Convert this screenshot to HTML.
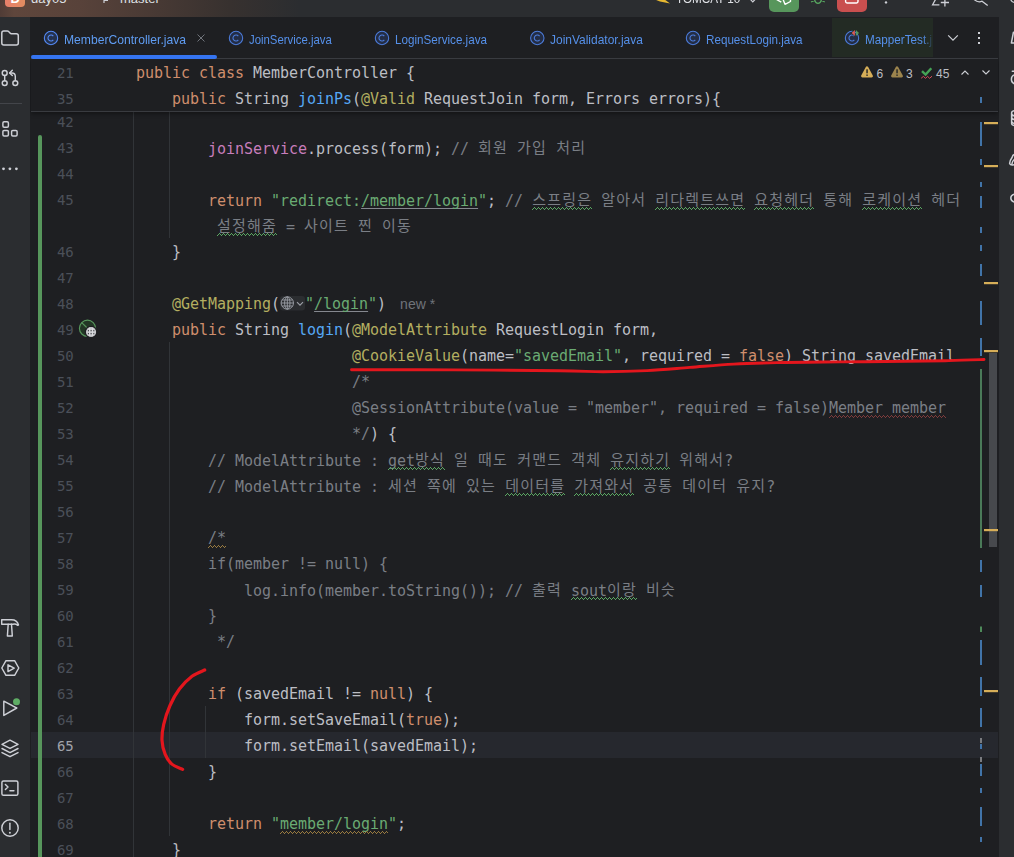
<!DOCTYPE html>
<html lang="ko"><head><meta charset="utf-8"><title>MemberController.java</title>
<style>
html,body{margin:0;padding:0;background:#1E1F22;}
body{width:1014px;height:857px;position:relative;overflow:hidden;font-family:"Liberation Sans","Noto Sans CJK KR",sans-serif;}
.abs{position:absolute}
#top{position:absolute;left:0;top:0;width:1014px;height:17px;background:linear-gradient(90deg,#503C36 0px,#5F463C 14px,#58423A 80px,#473934 160px,#37312F 230px,#2B2D30 300px);overflow:hidden}
.tt{font-size:13px;line-height:13px;color:#DFE1E5;white-space:nowrap}
#lside{position:absolute;left:0;top:17px;width:30px;height:840px;background:#2B2D30}
#rside{position:absolute;left:999px;top:17px;width:15px;height:840px;background:#2B2D30}
#tabs{position:absolute;left:31px;top:17px;width:967px;height:41px;background:#1E1F22;border-bottom:1px solid #393B40}
.tab{position:absolute;top:18.5px;height:41px;line-height:41px;font-size:13px;color:#5590EA;white-space:nowrap;transform-origin:0 50%}
.tab.act{color:#5F9CF2}
.cl{position:absolute;height:26px;line-height:26px;white-space:pre;font-family:"DejaVu Sans Mono", "Liberation Mono", monospace;font-size:15px;color:#BCBEC4;letter-spacing:-0.03px}
.ln{position:absolute;left:31px;width:42.4px;text-align:right;height:26px;line-height:26px;font-family:"DejaVu Sans Mono", "Liberation Mono", monospace;font-size:14px;color:#4B5059;letter-spacing:-0.2px}
.ln.cur{color:#A1A3AB}
.k{font-family:"Noto Sans CJK KR","NanumGothic",sans-serif;font-size:15px;letter-spacing:1.2px;position:relative;top:-1px}
.kw{color:#CF8E6D} .fn{color:#56A8F5} .an{color:#B3AE60} .st{color:#6AAB73} .cm{color:#7A7E85} .fld{color:#C77DBB}
.ul{text-decoration:underline;text-decoration-color:#85888F;text-decoration-thickness:1px;text-underline-offset:1.5px;text-decoration-skip-ink:none}
.inl{display:inline-block;width:25px;height:14px;vertical-align:middle}
.hint{font-family:"Liberation Sans",sans-serif;font-size:14px;color:#6F737A;letter-spacing:0;margin-left:14px}
.wn{position:absolute;top:60px;height:28px;line-height:28px;font-size:12px;color:#BCBEC4}
#sticky{position:absolute;left:31px;top:59px;width:967px;height:52px;background:#1E1F22;border-bottom:1px solid #393B40;box-shadow:0 2px 4px rgba(0,0,0,.35)}
#curline{position:absolute;left:31px;top:732px;width:967px;height:26px;background:#26282E}
.guide{position:absolute;width:1px;background:#313438}
svg{position:absolute;left:0;top:0;overflow:visible}
</style></head><body>
<div id="curline"></div>
<div class="guide" style="left:133px;top:112px;height:745px"></div>
<div class="guide" style="left:169px;top:112px;height:126px"></div>
<div class="guide" style="left:169px;top:342px;height:494px"></div>
<div class="guide" style="left:205px;top:706px;height:52px"></div>
<div class="abs" style="left:38px;top:135px;width:4px;height:722px;background:#57965C;border-radius:2px 2px 0 0"></div>
<div class="ln" style="top:109px">42</div>
<div class="ln" style="top:135px">43</div>
<div class="cl" style="top:135px;left:136px">        <span class="fld">joinService</span>.process(form); <span class="cm">// <span class="k">회원</span> <span class="k">가입</span> <span class="k">처리</span></span></div>
<div class="ln" style="top:161px">44</div>
<div class="ln" style="top:187px">45</div>
<div class="cl" style="top:187px;left:136px">        <span class="kw">return</span> <span class="st">"redirect:</span><span class="st ul">/member/login</span><span class="st">"</span>; <span class="cm">// <span class="k">스프링은</span> <span class="k">알아서</span> <span class="k">리다렉트쓰면</span> <span class="k">요청헤더</span> <span class="k">통해</span> <span class="k">로케이션</span> <span class="k">헤더</span></span></div>
<div class="cl" style="top:213px;left:208px"><span class="cm"> <span class="k">설정해줌</span> = <span class="k">사이트</span> <span class="k">찐</span> <span class="k">이동</span></span></div>
<div class="ln" style="top:239px">46</div>
<div class="cl" style="top:239px;left:136px">    }</div>
<div class="ln" style="top:265px">47</div>
<div class="ln" style="top:291px">48</div>
<div class="cl" style="top:291px;left:136px">    <span class="an">@GetMapping</span>(<span class="inl"></span><span class="st">"</span><span class="st ul">/login</span><span class="st">"</span>)<span class="hint">new *</span></div>
<div class="ln" style="top:317px">49</div>
<div class="cl" style="top:317px;left:136px">    <span class="kw">public</span> String <span class="fn">login</span>(<span class="an">@ModelAttribute</span> RequestLogin form,</div>
<div class="ln" style="top:343px">50</div>
<div class="cl" style="top:343px;left:136px">                        <span class="an">@CookieValue</span>(name=<span class="st">"savedEmail"</span>, required = <span class="kw">false</span>) String savedEmail</div>
<div class="ln" style="top:369px">51</div>
<div class="cl" style="top:369px;left:136px">                        <span class="cm">/*</span></div>
<div class="ln" style="top:395px">52</div>
<div class="cl" style="top:395px;left:136px">                        <span class="cm">@SessionAttribute(value = "member", required = false)Member member</span></div>
<div class="ln" style="top:421px">53</div>
<div class="cl" style="top:421px;left:136px">                        <span class="cm">*/</span>) {</div>
<div class="ln" style="top:447px">54</div>
<div class="cl" style="top:447px;left:136px">        <span class="cm">// ModelAttribute : get<span class="k">방식</span> <span class="k">일</span> <span class="k">때도</span> <span class="k">커맨드</span> <span class="k">객체</span> <span class="k">유지하기</span> <span class="k">위해서</span>?</span></div>
<div class="ln" style="top:473px">55</div>
<div class="cl" style="top:473px;left:136px">        <span class="cm">// ModelAttribute : <span class="k">세션</span> <span class="k">쪽에</span> <span class="k">있는</span> <span class="k">데이터를</span> <span class="k">가져와서</span> <span class="k">공통</span> <span class="k">데이터</span> <span class="k">유지</span>?</span></div>
<div class="ln" style="top:499px">56</div>
<div class="ln" style="top:525px">57</div>
<div class="cl" style="top:525px;left:136px">        <span class="cm">/*</span></div>
<div class="ln" style="top:551px">58</div>
<div class="cl" style="top:551px;left:136px">        <span class="cm">if(member != null) {</span></div>
<div class="ln" style="top:577px">59</div>
<div class="cl" style="top:577px;left:136px">            <span class="cm">log.info(member.toString()); // <span class="k">출력</span> sout<span class="k">이랑</span> <span class="k">비슷</span></span></div>
<div class="ln" style="top:603px">60</div>
<div class="cl" style="top:603px;left:136px">        <span class="cm">}</span></div>
<div class="ln" style="top:629px">61</div>
<div class="cl" style="top:629px;left:136px">         <span class="cm">*/</span></div>
<div class="ln" style="top:655px">62</div>
<div class="ln" style="top:681px">63</div>
<div class="cl" style="top:681px;left:136px">        <span class="kw">if</span> (savedEmail != <span class="kw">null</span>) {</div>
<div class="ln" style="top:707px">64</div>
<div class="cl" style="top:707px;left:136px">            form.setSaveEmail(<span class="kw">true</span>);</div>
<div class="ln cur" style="top:733px">65</div>
<div class="cl" style="top:733px;left:136px">            form.setEmail(savedEmail);</div>
<div class="ln" style="top:759px">66</div>
<div class="cl" style="top:759px;left:136px">        }</div>
<div class="ln" style="top:785px">67</div>
<div class="ln" style="top:811px">68</div>
<div class="cl" style="top:811px;left:136px">        <span class="kw">return</span> <span class="st">"member/login"</span>;</div>
<div class="ln" style="top:837px">69</div>
<div class="cl" style="top:837px;left:136px">    }</div>
<div id="sticky"></div>
<div class="ln" style="top:60px">21</div>
<div class="cl" style="top:60px;left:136px"><span class="kw">public class</span> MemberController {</div>
<div class="ln" style="top:86px">35</div>
<div class="cl" style="top:86px;left:136px">    <span class="kw">public</span> String <span class="fn">joinPs</span>(<span class="an">@Valid</span> RequestJoin form, Errors errors){</div>
<div id="tabs"></div>
<div class="abs" style="left:832px;top:18px;width:101px;height:39px;background:#232B24"></div>
<div class="tab act" style="left:63.6px;transform:scaleX(0.9329)">MemberController.java</div>
<div class="tab" style="left:248.5px;transform:scaleX(0.8747)">JoinService.java</div>
<div class="tab" style="left:394.6px;transform:scaleX(0.8964)">LoginService.java</div>
<div class="tab" style="left:549.7px;transform:scaleX(0.9203)">JoinValidator.java</div>
<div class="tab" style="left:705.6px;transform:scaleX(0.8969)">RequestLogin.java</div>
<div class="tab" style="left:865.4px;transform:scaleX(0.9);-webkit-mask-image:linear-gradient(90deg,#000 86%,transparent 104%);mask-image:linear-gradient(90deg,#000 86%,transparent 104%)">MapperTest.j</div>
<div class="abs" style="left:31px;top:55px;width:186px;height:4px;border-radius:2px;background:#3574F0"></div>
<div class="wn" style="left:876.5px">6</div><div class="wn" style="left:906px">3</div><div class="wn" style="left:936px">45</div>
<div id="lside"></div>
<div id="rside"></div>
<svg width="1014" height="857" viewBox="0 0 1014 857">
<defs>
<pattern id="wg" width="4" height="3" patternUnits="userSpaceOnUse"><path d="M0 2h1v1h-1zM1 1h1v1h-1zM2 0h1v1h-1zM3 1h1v1h-1z" fill="#5BA863"/></pattern>
<pattern id="wr" width="4" height="3" patternUnits="userSpaceOnUse"><path d="M0 2h1v1h-1zM1 1h1v1h-1zM2 0h1v1h-1zM3 1h1v1h-1z" fill="#803C3C"/></pattern>
<pattern id="wy" width="4" height="3" patternUnits="userSpaceOnUse"><path d="M0 2h1v1h-1zM1 1h1v1h-1zM2 0h1v1h-1zM3 1h1v1h-1z" fill="#9A7B40"/></pattern>
</defs>
<rect transform="translate(532,207)" width="60" height="3" fill="url(#wg)"/><rect transform="translate(655,207)" width="90" height="3" fill="url(#wg)"/><rect transform="translate(754,207)" width="60" height="3" fill="url(#wg)"/><rect transform="translate(862,207)" width="60" height="3" fill="url(#wg)"/><rect transform="translate(217,233)" width="60" height="3" fill="url(#wg)"/><rect transform="translate(388,467)" width="57" height="3" fill="url(#wg)"/><rect transform="translate(610,467)" width="60" height="3" fill="url(#wg)"/><rect transform="translate(505,493)" width="60" height="3" fill="url(#wg)"/><rect transform="translate(574,493)" width="60" height="3" fill="url(#wg)"/><rect transform="translate(571,597)" width="66" height="3" fill="url(#wg)"/><rect transform="translate(829,415)" width="117" height="3" fill="url(#wr)"/><rect transform="translate(208,545)" width="18" height="3" fill="url(#wy)"/><rect transform="translate(280,831)" width="108" height="3" fill="url(#wy)"/>
<rect x="989" y="353" width="8" height="194" fill="#47494D"/>
<rect x="980" y="122" width="2" height="24" fill="#4174A9"/><rect x="980" y="159" width="2" height="6" fill="#4174A9"/><rect x="980" y="182" width="2" height="5" fill="#4174A9"/><rect x="980" y="196" width="2" height="12" fill="#4174A9"/><rect x="980" y="227" width="2" height="6" fill="#4174A9"/><rect x="980" y="245" width="2" height="6" fill="#4174A9"/><rect x="980" y="264" width="2" height="12" fill="#4174A9"/><rect x="980" y="301" width="2" height="24" fill="#4174A9"/><rect x="980" y="338" width="2" height="18" fill="#4174A9"/><rect x="980" y="560" width="2" height="12" fill="#4174A9"/><rect x="980" y="585" width="2" height="12" fill="#4174A9"/><rect x="980" y="640" width="2" height="25" fill="#4174A9"/><rect x="980" y="677" width="2" height="19" fill="#4174A9"/><rect x="980" y="708" width="2" height="19" fill="#4174A9"/><rect x="980" y="744" width="2" height="5" fill="#4174A9"/><rect x="980" y="764" width="2" height="12" fill="#4174A9"/><rect x="980" y="788" width="2" height="5" fill="#4174A9"/><rect x="980" y="807" width="2" height="19" fill="#4174A9"/><rect x="980" y="837" width="2" height="5" fill="#4174A9"/><rect x="980" y="369" width="2" height="179" fill="#4A7A58"/><rect x="980" y="626.5" width="2" height="5.5" fill="#4E8A5A"/><rect x="980" y="738" width="2" height="5" fill="#7A7C80"/><rect x="980" y="757" width="2" height="5" fill="#7A7C80"/><rect x="984" y="122" width="14" height="2.2" fill="#D6AE58"/><rect x="984" y="165" width="14" height="2.2" fill="#D6AE58"/><rect x="984" y="282" width="14" height="2.2" fill="#D6AE58"/><rect x="984" y="350" width="14" height="2.2" fill="#D6AE58"/><rect x="984" y="529" width="14" height="2.2" fill="#D6AE58"/><rect x="984" y="690" width="14" height="2.2" fill="#D6AE58"/>
<rect x="980" y="97" width="2" height="6" fill="#4174A9"/>

<circle cx="87.5" cy="328.3" r="8.1" fill="#223625" stroke="#57965C" stroke-width="1.15"/>
<path d="M81.7 322.7 L87.2 328" stroke="#57965C" stroke-width="1.15"/>
<circle cx="91.05" cy="332" r="6.3" fill="#1E1F22"/>
<circle cx="91.05" cy="332" r="5.1" fill="#C9CACE"/>
<path d="M87.9 330 h1.1 v1.2 h-1.1z M90.5 330 h1.2 v1.2 h-1.2z M93.2 330 h1.1 v1.2 h-1.1z M87.9 333 h1.1 v1.2 h-1.1z M90.5 333 h1.2 v1.2 h-1.2z M93.2 333 h1.1 v1.2 h-1.1z" fill="#4A4C51"/>
<path d="M89.6 327.6 V336.4 M92.6 327.6 V336.4" stroke="#E2E3E6" stroke-width="0.7" fill="none"/>
<rect x="280" y="296" width="25" height="14.5" rx="3" fill="#2B2D30"/>
<g fill="none" stroke="#9DA0A8" stroke-width="0.9">
<circle cx="287.3" cy="303" r="6.2"/><ellipse cx="287.3" cy="303" rx="2.7" ry="6.2"/><path d="M281.1 303 H293.5 M287.3 296.8 V309.2 M282 300 H292.6 M282 306 H292.6"/>
<path d="M297 302.2 L300 305.2 L303 302.2" stroke-width="1.1"/>
</g>

<circle cx="51" cy="38" r="6.7" fill="#25324D" stroke="#548AF7" stroke-width="1.05"/><path d="M53.3 36.1 A3 3 0 1 0 53.3 39.9" fill="none" stroke="#548AF7" stroke-width="1.1"/><circle cx="236" cy="38" r="6.7" fill="#232D45" stroke="#4C7CDB" stroke-width="1.05"/><path d="M238.3 36.1 A3 3 0 1 0 238.3 39.9" fill="none" stroke="#4C7CDB" stroke-width="1.1"/><circle cx="382" cy="38" r="6.7" fill="#232D45" stroke="#4C7CDB" stroke-width="1.05"/><path d="M384.3 36.1 A3 3 0 1 0 384.3 39.9" fill="none" stroke="#4C7CDB" stroke-width="1.1"/><circle cx="537.3" cy="38" r="6.7" fill="#232D45" stroke="#4C7CDB" stroke-width="1.05"/><path d="M539.5999999999999 36.1 A3 3 0 1 0 539.5999999999999 39.9" fill="none" stroke="#4C7CDB" stroke-width="1.1"/><circle cx="693" cy="38" r="6.7" fill="#232D45" stroke="#4C7CDB" stroke-width="1.05"/><path d="M695.3 36.1 A3 3 0 1 0 695.3 39.9" fill="none" stroke="#4C7CDB" stroke-width="1.1"/><circle cx="852" cy="38" r="6.7" fill="#232D45" stroke="#4C7CDB" stroke-width="1.05"/><path d="M854.3 36.1 A3 3 0 1 0 854.3 39.9" fill="none" stroke="#4C7CDB" stroke-width="1.1"/><path d="M850.8 33.1 L855 29 V36.8 Z" fill="#232B24"/><path d="M851.7 33.1 L854.9 29.9 V36 Z" fill="#DB5C5C"/><path d="M859 33 L855.9 29.9 V36 Z" fill="#57965C"/>

<path d="M867 67.6 L871.6 76.1 H862.4 Z" fill="#D6AE58" stroke="#D6AE58" stroke-width="2.7" stroke-linejoin="round"/><rect x="866.3" y="69.3" width="1.5" height="4" fill="#2A2A28"/><rect x="866.3" y="74.5" width="1.5" height="1.4" fill="#2A2A28"/>
<path d="M897 67.6 L901.6 76.1 H892.4 Z" fill="#9C844D" stroke="#9C844D" stroke-width="2.7" stroke-linejoin="round"/><rect x="896.3" y="69.3" width="1.5" height="4" fill="#2A2A28"/><rect x="896.3" y="74.5" width="1.5" height="1.4" fill="#2A2A28"/>
<path d="M922 71.2 L925.6 74.6 L931.3 68.2" fill="none" stroke="#45A356" stroke-width="2.4"/>
<path d="M921.1 78.3 L923.4 76.4 L925.5 78.3 L927.6 76.4 L929.6 78.3 L932 76.2" fill="none" stroke="#D64D5B" stroke-width="1"/>
<path d="M961.5 74.5 L965 71 L968.5 74.5" fill="none" stroke="#CED0D6" stroke-width="1.1"/>
<path d="M982.5 70.5 L986 74 L989.5 70.5" fill="none" stroke="#CED0D6" stroke-width="1.1"/>
<path d="M948.2 35.4 L953 40.2 L957.8 35.4" fill="none" stroke="#CED0D6" stroke-width="1.2"/>
<rect x="978" y="32" width="2" height="2" fill="#CED0D6"/><rect x="978" y="37" width="2" height="2" fill="#CED0D6"/><rect x="978" y="42" width="2" height="2" fill="#CED0D6"/>
<path d="M197.5 34.5 L204.5 41.5 M204.5 34.5 L197.5 41.5" stroke="#70747B" stroke-width="1"/>


<g fill="none" stroke="#CED0D6" stroke-width="1.45" stroke-linejoin="round" stroke-linecap="round">
<path d="M3.8 30.9 H7.2 Q8 30.9 8.6 31.6 L10 33.1 Q10.6 33.8 11.4 33.8 H16.3 Q18.3 33.8 18.3 35.8 V42.9 Q18.3 44.9 16.3 44.9 H3.8 Q1.8 44.9 1.8 42.9 V32.9 Q1.8 30.9 3.8 30.9 Z" stroke-width="1.5"/>
<circle cx="4.7" cy="73" r="2.45" stroke-width="1.45"/><circle cx="4.7" cy="83.1" r="2.45" stroke-width="1.45"/><circle cx="15.3" cy="83.1" r="2.45" stroke-width="1.45"/>
<path d="M4.7 75.5 V80.6" stroke-width="1.45"/><path d="M15.3 80.6 V76.4 Q15.3 72.9 12 72.9 H9.8" stroke-width="1.45"/><path d="M12.3 70.3 L9.6 72.9 L12.3 75.5" stroke-width="1.45"/>
<rect x="2.9" y="121.7" width="5.5" height="5.5" rx="1.2"/><rect x="2.9" y="130.4" width="5.5" height="5.5" rx="1.2"/><rect x="11.6" y="130.4" width="5.5" height="5.5" rx="1.2"/>
<path d="M1.7 619.8 H11.5 C15 619.8 17.6 621.6 18.5 625 L17.5 625.3 C16.2 623.9 14.8 623.8 12.8 624.2 H1.7 Z"/>
<path d="M8.2 624.3 L7.4 636 H12.3 L11.5 624.3"/>
<path d="M1.8 668 L6 660.7 H14.6 L18.8 668 L14.6 675.3 H6 Z"/><path d="M8 664.8 L14.2 668.2 L8 671.6 Z"/>
<path d="M3.8 701.2 L16.8 708 L3.8 715.4 Z"/>
<path d="M10 740.2 L18 744.3 L10 748.4 L2 744.3 Z"/><path d="M2 748.5 L10 752.6 L18 748.5"/><path d="M2 752.6 L10 756.7 L18 752.6"/>
<rect x="1.9" y="781" width="16" height="14.3" rx="1.6"/><path d="M5.4 784.6 L8 787.1 L5.4 789.6"/><path d="M9.9 790.8 H13.9"/>
<circle cx="10" cy="828" r="8.2"/><path d="M9.9 823.2 V829.4"/>
</g>
<circle cx="9.9" cy="832.8" r="1" fill="#CED0D6"/>
<circle cx="3.5" cy="168.8" r="1.4" fill="#CED0D6"/><circle cx="9.9" cy="168.8" r="1.4" fill="#CED0D6"/><circle cx="16.4" cy="168.8" r="1.4" fill="#CED0D6"/>
<rect x="0" y="103" width="22" height="1" fill="#43454A"/>
<circle cx="16.5" cy="701.8" r="4.6" fill="#2B2D30"/><circle cx="16.5" cy="701.8" r="3.5" fill="#5FAD65"/>


<g fill="none" stroke="#CED0D6" stroke-width="1.5" stroke-linecap="round" stroke-linejoin="round">
<path d="M1013.4 32.3 L1011.4 43 H1015"/>
<path d="M1012.3 71.3 H1015 M1015 74.7 Q1011.4 75.6 1011.4 79.3 Q1011.4 83 1015 84"/>
<path d="M1015 110.6 Q1011.6 111 1011.6 113 V123.2 Q1011.6 125.2 1015 125.6 M1011.6 113.3 Q1012 115.6 1015 115.9 M1011.6 117.2 Q1012 119.5 1015 119.8 M1011.6 121.1 Q1012 123.4 1015 123.7"/>
<path d="M1015 154.4 Q1012.8 154.6 1012.2 157.2 Q1009.4 161 1009.7 163.8 Q1010.6 165.8 1015 164.5 M1015 158.8 Q1012.6 160.6 1012 163.6"/>
<path d="M1015 194 Q1010.8 194.9 1010.8 198.1 Q1010.8 201.3 1015 202.2"/>
</g>

<path d="M351.5 369.7 C368.5 369.7 418.8 369.7 453.5 369.9 C488.2 370.1 535.1 370.4 560.0 370.7 C584.9 371.0 588.5 371.7 603.0 371.7 C617.5 371.7 632.5 371.3 647.0 370.6 C661.5 369.9 675.6 368.5 690.0 367.4 C704.4 366.3 719.1 364.9 733.6 364.1 C748.1 363.3 759.3 363.0 777.0 362.6 C794.7 362.2 818.7 362.1 840.0 361.9 C861.3 361.7 886.8 361.5 905.0 361.3 C923.2 361.1 935.8 360.9 949.0 360.6 C962.2 360.3 978.2 359.7 984.0 359.5" fill="none" stroke="#E4161D" stroke-width="2.9" stroke-linecap="round"/>
<path d="M204.7 670.0 C202.6 671.0 196.2 673.1 192.0 676.3 C187.8 679.5 183.1 684.1 179.4 689.0 C175.7 693.9 172.6 699.6 170.0 705.5 C167.4 711.4 165.0 718.6 163.7 724.4 C162.4 730.2 161.8 735.2 162.0 740.2 C162.2 745.2 163.6 750.5 165.2 754.4 C166.8 758.3 168.7 761.4 171.6 763.9 C174.5 766.4 180.8 768.5 182.6 769.4" fill="none" stroke="#E4161D" stroke-width="3.2" stroke-linecap="round"/>
</svg>

<div id="top">
<div class="abs" style="left:5px;top:-13px;width:20px;height:20px;border-radius:4px;background:linear-gradient(90deg,#E87F6A,#E28C60)"></div>
<div class="abs tt" style="left:10.5px;top:-8px;font-weight:bold;color:#fff">D</div>
<div class="abs tt" style="left:31px;top:-8px">day05</div>
<div class="abs tt" style="left:120px;top:-8px">master</div>
<div class="abs tt" style="left:676px;top:-8px;transform:scaleX(.9);transform-origin:0 0">TOMCAT 10</div>
<div class="abs" style="left:769px;top:-18px;width:30px;height:29.7px;border-radius:5px;background:#57965C"></div>
<div class="abs" style="left:837px;top:-18px;width:30px;height:29.7px;border-radius:5px;background:#C94F4F"></div>
<svg width="1014" height="17" viewBox="0 0 1014 17">
<path d="M104 -3 V3 M104 0.5 H108" stroke="#CED0D6" stroke-width="1.2" fill="none"/>
<path d="M651 -2 L660 1.5 L670 3.5 L664 -1 Z" fill="#E8B931"/>
<path d="M749.5 -1.5 L752.8 1.8 L756 -1.5" stroke="#CED0D6" stroke-width="1.2" fill="none"/>
<path d="M776.5 -0.5 L781.3 2.2 M782.9 -1 L785 4.3 L790.5 1.5 V-1" stroke="#fff" stroke-width="1.4" fill="none" stroke-linejoin="round"/>
<path d="M814.4 -1 Q815.2 3.3 818 3.3 Q820.8 3.3 821.6 -1 M811 2 L814.6 0.5 M821.4 0.5 L824.8 2" stroke="#57A55F" stroke-width="1.3" fill="none"/>
<rect x="845.6" y="-8" width="12.4" height="11" rx="1.4" stroke="#fff" stroke-width="1.4" fill="none"/>
<circle cx="886" cy="2.4" r="1.2" fill="#CED0D6"/>
<path d="M935.5 -0.5 L932.6 4.8 H939.4 M944.9 -1 V6.6 M940.8 2.5 H949" stroke="#CED0D6" stroke-width="1.3" fill="none"/>
<path d="M973 -1.5 Q978 3.5 982.3 1 M981.7 1 L987.7 5.6" stroke="#CED0D6" stroke-width="1.3" fill="none"/>
<path d="M1010.5 -1 Q1011.5 2 1014 2.3" stroke="#CED0D6" stroke-width="1.3" fill="none"/>
</svg>
</div>

</body></html>
